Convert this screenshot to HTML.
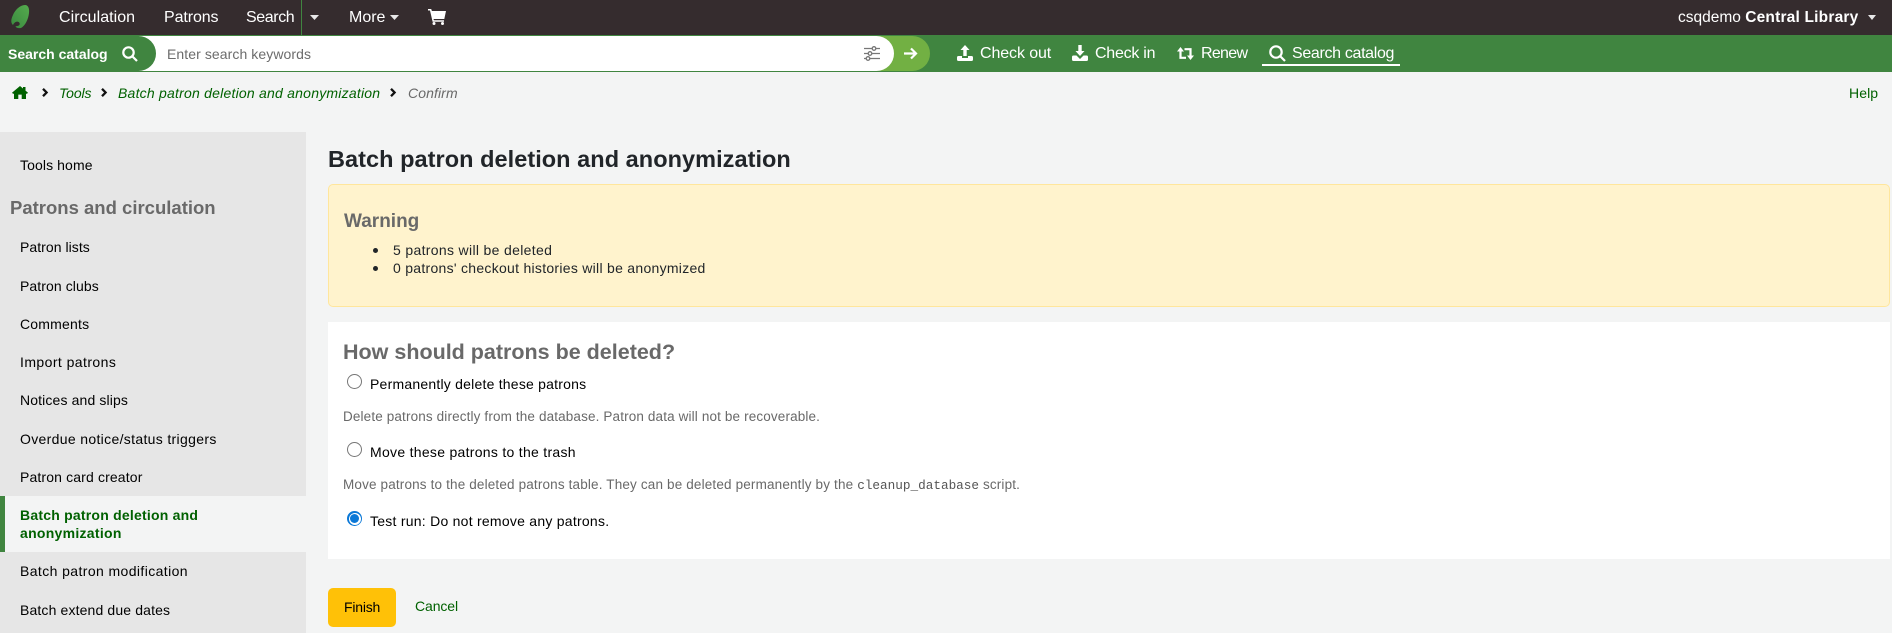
<!DOCTYPE html>
<html lang="en"><head><meta charset="utf-8"><title>Batch patron deletion and anonymization</title>
<style>
html,body{margin:0;padding:0;width:1892px;height:633px;overflow:hidden;background:#f3f4f4}
body{font-family:"Liberation Sans",sans-serif;font-size:14px;color:#000;position:relative}
.b{position:absolute}
.t{position:absolute;white-space:nowrap;line-height:20px;height:20px}
.n{color:#fff;font-size:16px}
.g{color:#006100}
.i{font-style:italic}
.h{color:#696969;font-weight:bold}
svg{position:absolute;overflow:visible}
.r{position:absolute;left:347px;width:13px;height:13px;border:1px solid #767676;border-radius:50%;background:#fff}
.ch{fill:none;stroke:#111;stroke-width:2.300}
</style></head><body>
<div class="b" style="left:0;top:0;width:1892px;height:35px;background:#352c2e"></div>
<div class="b" style="left:0;top:35px;width:1892px;height:37px;background:#408540"></div>
<div class="b" style="left:301px;top:0;width:1px;height:35px;background:#408540"></div>
<svg style="left:11px;top:5px" width="19" height="23" viewBox="0 0 19 23"><defs><linearGradient id="lf" x1="0" y1="1" x2="1" y2="0"><stop offset="0" stop-color="#3a8a3f"/><stop offset="1" stop-color="#55ab4e"/></linearGradient></defs><path d="M14 0C17.500 0 18.500 4 18 8C17.500 14 14 21 10 23C7 23.500 5 23 4.500 21C7 21.500 9.500 20 8.500 18C7.500 16 4 16 2 20C-0.500 18 0 14 2 10C4 5 9 0 14 0Z" fill="url(#lf)"/></svg>
<div class="t n" style="left:59px;top:8px;letter-spacing:.05px">Circulation</div>
<div class="t n" style="left:164px;top:8px;letter-spacing:-.1px">Patrons</div>
<div class="t n" style="left:246px;top:8px;letter-spacing:-.4px">Search</div>
<svg style="left:310px;top:15px" width="9" height="5"><path d="M0 0H9L4.500 5Z" fill="#e8e8e8"/></svg>
<div class="t n" style="left:349px;top:8px">More</div>
<svg style="left:390px;top:15px" width="9" height="5"><path d="M0 0H9L4.500 5Z" fill="#e8e8e8"/></svg>
<svg style="left:428px;top:9px" width="18" height="16" viewBox="0 0 18 16"><path d="M0 0H3.200L3.900 2H18L16.300 10H5.500L5.900 11.300H16V12.700H4.600L2 1.500H0Z" fill="#fff"/><circle cx="6" cy="14.500" r="1.500" fill="#fff"/><circle cx="14.500" cy="14.500" r="1.500" fill="#fff"/></svg>
<div class="t n" style="left:1678px;top:8px;font-size:15.500px">csqdemo <b style="letter-spacing:.2px">Central Library</b></div>
<svg style="left:1868px;top:15px" width="8" height="5"><path d="M0 0H8L4 5Z" fill="#e8e8e8"/></svg>

<div class="b" style="left:860px;top:36px;width:70px;height:35px;background:#72b043;border-radius:0 18px 18px 0"></div>
<div class="b" style="left:120px;top:36px;width:774px;height:35px;background:#fff;border-radius:0 18px 18px 0"></div>
<div class="b" style="left:0;top:36px;width:156px;height:35px;background:#408540;border-radius:0 18px 18px 0"></div>
<div class="t" style="left:8px;top:44px;color:#fff;font-weight:bold;font-size:14px">Search catalog</div>
<svg style="left:122px;top:46px" width="16" height="16" viewBox="0 0 16 16" fill="none" stroke="#fff" stroke-width="2.200"><circle cx="6.500" cy="6.500" r="5.200"/><path d="M10.500 10.500L15 15"/></svg>
<div class="t" style="left:167px;top:44px;color:#6c6c6c;letter-spacing:.08px">Enter search keywords</div>
<svg style="left:864px;top:46px" width="16" height="15" viewBox="0 0 16 15" fill="none" stroke="#777" stroke-width="1.300"><path d="M0 2.500H16M0 7.500H16M0 12.500H16"/><g fill="#fff"><circle cx="10" cy="2.500" r="1.800"/><circle cx="6" cy="7.500" r="1.800"/><circle cx="4" cy="12.500" r="1.800"/></g></svg>
<svg style="left:904px;top:47px" width="13" height="13" viewBox="0 0 13 13" fill="none" stroke="#fff" stroke-width="2.200"><path d="M0 6.500H12M7 1.500L12 6.500L7 11.500"/></svg>

<svg style="left:957px;top:45px" width="16" height="16" viewBox="0 0 16 16" fill="#fff"><path d="M8 0L12.500 5H9.700V11H6.300V5H3.500Z"/><path d="M1.500 11H5V13H11V11H14.500Q16 11 16 12.500V14.500Q16 16 14.500 16H1.500Q0 16 0 14.500V12.500Q0 11 1.500 11Z"/></svg>
<div class="t n" style="left:980px;top:44px;letter-spacing:-.1px">Check out</div>
<svg style="left:1072px;top:45px" width="16" height="16" viewBox="0 0 16 16" fill="#fff"><path d="M6.300 0H9.700V6H12.500L8 11L3.500 6H6.300Z"/><path d="M1.500 10.500H4.500L8 14L11.500 10.500H14.500Q16 10.500 16 12V14.500Q16 16 14.500 16H1.500Q0 16 0 14.500V12Q0 10.500 1.500 10.500Z"/></svg>
<div class="t n" style="left:1095px;top:44px;letter-spacing:-.25px">Check in</div>
<svg style="left:1177px;top:47px" width="17" height="13" viewBox="0 0 17 13"><path d="M3.500 3V10.800H9M7.500 2.200H13.500V10" fill="none" stroke="#fff" stroke-width="2.200"/><path d="M0 4.500L3.500 0L7 4.500ZM10 8.500H17L13.500 13Z" fill="#fff"/></svg>
<div class="t n" style="left:1201px;top:44px;letter-spacing:-.7px">Renew</div>
<svg style="left:1269px;top:45px" width="17" height="17" viewBox="0 0 17 17" fill="none" stroke="#fff" stroke-width="2.200"><circle cx="7" cy="7" r="5.700"/><path d="M11 11L16 16"/></svg>
<div class="t n" style="left:1292px;top:44px;letter-spacing:-.33px">Search catalog</div>
<div class="b" style="left:1262px;top:64px;width:138px;height:2px;background:#fff"></div>

<svg style="left:12px;top:86px" width="16" height="13" viewBox="0 0 16 13" fill="#006100"><path d="M8 0L11 2.500V1H13.500V4.600L16 6.800L15 7.800H14V13H9.700V8.600H6.300V13H2V7.800H1L0 6.800Z"/></svg>
<svg style="left:42px;top:88px" width="6" height="9"><path class="ch" d="M1 .8L4.600 4.500L1 8.200"/></svg>
<div class="t g i" style="left:59px;top:83px;letter-spacing:-.1px">Tools</div>
<svg style="left:101px;top:88px" width="6" height="9"><path class="ch" d="M1 .8L4.600 4.500L1 8.200"/></svg>
<div class="t g i" style="left:118px;top:83px;letter-spacing:.22px">Batch patron deletion and anonymization</div>
<svg style="left:390px;top:88px" width="6" height="9"><path class="ch" d="M1 .8L4.600 4.500L1 8.200"/></svg>
<div class="t i" style="left:408px;top:83px;color:#696969;letter-spacing:.1px">Confirm</div>
<div class="t g" style="left:1849px;top:83px;letter-spacing:.1px">Help</div>

<div class="b" style="left:0;top:132px;width:306px;height:501px;background:#e6e6e6"></div>
<div class="b" style="left:0;top:496px;width:306px;height:56px;background:#f3f4f4"></div>
<div class="b" style="left:0;top:496px;width:5px;height:56px;background:#408540"></div>
<div class="t" style="left:20px;top:155px;letter-spacing:.1px">Tools home</div>
<div class="t h" style="left:10px;top:198px;font-size:18.500px">Patrons and circulation</div>
<div class="t" style="left:20px;top:237px;letter-spacing:.05px">Patron lists</div>
<div class="t" style="left:20px;top:276px;letter-spacing:.08px">Patron clubs</div>
<div class="t" style="left:20px;top:314px;letter-spacing:.2px">Comments</div>
<div class="t" style="left:20px;top:352px;letter-spacing:.43px">Import patrons</div>
<div class="t" style="left:20px;top:390px;letter-spacing:.13px">Notices and slips</div>
<div class="t" style="left:20px;top:429px;letter-spacing:.33px">Overdue notice/status triggers</div>
<div class="t" style="left:20px;top:467px;letter-spacing:.14px">Patron card creator</div>
<div class="t g" style="left:20px;top:505px;font-weight:bold;letter-spacing:.22px">Batch patron deletion and</div>
<div class="t g" style="left:20px;top:523px;font-weight:bold;letter-spacing:.28px">anonymization</div>
<div class="t" style="left:20px;top:561px;letter-spacing:.4px">Batch patron modification</div>
<div class="t" style="left:20px;top:600px;letter-spacing:.14px">Batch extend due dates</div>

<h1 class="t" style="left:328px;top:149px;margin:0;font-size:23.500px;letter-spacing:.05px;color:#212529">Batch patron deletion and anonymization</h1>
<div class="b" style="left:328px;top:184px;width:1560px;height:121px;background:#fff3cd;border:1px solid #ffe69c;border-radius:5px"></div>
<div class="t h" style="left:344px;top:212px;font-size:19px">Warning</div>
<div class="b" style="left:373px;top:248px;width:5px;height:5px;border-radius:50%;background:#212529"></div>
<div class="t" style="left:393px;top:240px;color:#212529;letter-spacing:.33px">5 patrons will be deleted</div>
<div class="b" style="left:373px;top:266px;width:5px;height:5px;border-radius:50%;background:#212529"></div>
<div class="t" style="left:393px;top:258px;color:#212529;letter-spacing:.28px">0 patrons' checkout histories will be anonymized</div>

<div class="b" style="left:328px;top:322px;width:1562px;height:237px;background:#fff"></div>
<h2 class="t" style="left:343px;top:342px;margin:0;font-size:21.500px;color:#696969">How should patrons be deleted?</h2>
<div class="r" style="top:374px"></div>
<div class="t" style="left:370px;top:374px;letter-spacing:.22px">Permanently delete these patrons</div>
<div class="t" style="left:343px;top:407px;font-size:13.500px;color:#696969;letter-spacing:.14px">Delete patrons directly from the database. Patron data will not be recoverable.</div>
<div class="r" style="top:442px"></div>
<div class="t" style="left:370px;top:442px;letter-spacing:.29px">Move these patrons to the trash</div>
<div class="t" style="left:343px;top:475px;font-size:13.500px;color:#696969;letter-spacing:.16px">Move patrons to the deleted patrons table. They can be deleted permanently by the <span style="font-family:'Liberation Mono',monospace;font-size:12.700px;color:#555;letter-spacing:0">cleanup_database</span> script.</div>
<div class="b" style="left:347px;top:511px;width:15px;height:15px;border-radius:50%;background:#0a78d7"></div>
<div class="b" style="left:348.500px;top:512.500px;width:12px;height:12px;border-radius:50%;background:#fff"></div>
<div class="b" style="left:350px;top:514px;width:9px;height:9px;border-radius:50%;background:#0a78d7"></div>
<div class="t" style="left:370px;top:511px;letter-spacing:.25px">Test run: Do not remove any patrons.</div>

<div class="b" style="left:328px;top:588px;width:68px;height:39px;background:#ffc107;border-radius:5px"></div>
<div class="t" style="left:344px;top:597px;letter-spacing:-.2px">Finish</div>
<div class="t g" style="left:415px;top:596px;letter-spacing:-.1px">Cancel</div>
</body></html>
